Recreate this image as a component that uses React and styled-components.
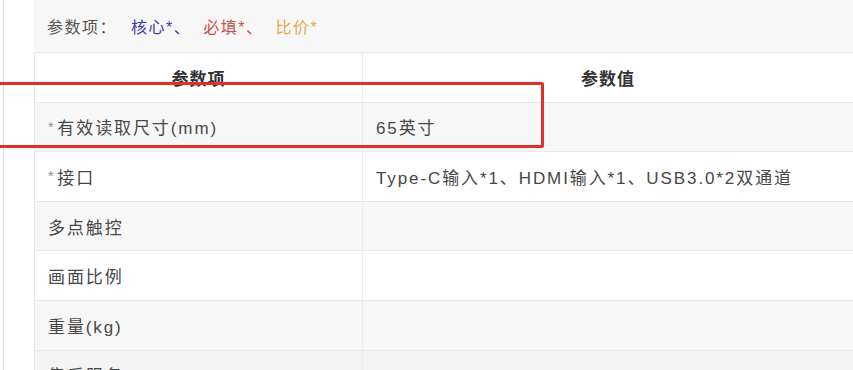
import React from "react";
import styled, { createGlobalStyle } from "styled-components";

const GlobalStyle = createGlobalStyle`
  html, body { margin: 0; padding: 0; background: #ffffff; }
  body {
    font-family: "Liberation Sans", "Noto Sans CJK SC", sans-serif;
    color: #444;
  }
`;

const Page = styled.div`
  position: relative;
  display: flex;
  width: 853px;
  height: 370px;
  overflow: hidden;
  background: #fff;
`;

const LeftRail = styled.div`
  flex: 0 0 30px;
  margin-left: 3px;
  border-left: 1px solid #dcdcdc;
`;

const Panel = styled.div`
  flex: 1;
  display: flex;
  flex-direction: column;
  min-width: 0;
`;

const LegendBar = styled.div`
  height: 52px;
  flex: 0 0 52px;
  box-sizing: border-box;
  display: flex;
  align-items: center;
  padding-left: 13px;
  background: #f7f7f7;
  font-size: 16px;
  letter-spacing: 1.5px;
  color: #555;
`;

const LegendLabel = styled.span`
  margin-right: 14px;
`;

const Tag = styled.span`
  color: ${(p) => p.$color};
  margin-right: 12px;
`;

const Table = styled.div`
  display: grid;
  grid-template-columns: 328px 1fr;
  border-left: 1px solid #e6e6e6;
  border-top: 1px solid #e6e6e6;
`;

const Cell = styled.div`
  height: 49.6px;
  box-sizing: border-box;
  display: flex;
  align-items: center;
  justify-content: ${(p) => (p.$head ? "center" : "flex-start")};
  padding: 0 13px;
  background: ${(p) => p.$bg};
  border-bottom: 1px solid #e8e8e8;
  border-right: ${(p) => (p.$first ? "1px solid #ececec" : "none")};
  font-size: 17px;
  letter-spacing: ${(p) => (p.$head ? "1px" : "1.9px")};
  font-weight: ${(p) => (p.$head ? 700 : 400)};
  color: ${(p) => (p.$head ? "#333" : "#474747")};
  white-space: nowrap;
`;

const Star = styled.span`
  color: #888;
  font-size: 14px;
  margin-right: 2px;
`;

const Highlight = styled.div`
  position: absolute;
  left: -4px;
  top: 82px;
  width: 548px;
  height: 66px;
  border: 3px solid #e0302a;
  border-radius: 2px;
  box-sizing: border-box;
  pointer-events: none;
`;

const rows = [
  { name: "有效读取尺寸(mm)", value: "65英寸", req: true, bg: "#f7f7f7" },
  { name: "接口", value: "Type-C输入*1、HDMI输入*1、USB3.0*2双通道", req: true, bg: "#ffffff" },
  { name: "多点触控", value: "", bg: "#f7f7f7" },
  { name: "画面比例", value: "", bg: "#ffffff" },
  { name: "重量(kg)", value: "", bg: "#f7f7f7" },
  { name: "售后服务", value: "", bg: "#f3f3f3" },
];

export default function App() {
  return (
    <>
      <GlobalStyle />
      <Page>
        <LeftRail />
        <Panel>
          <LegendBar>
            <LegendLabel>参数项：</LegendLabel>
            <Tag $color="#3b3ba6">核心*、</Tag>
            <Tag $color="#c9514c">必填*、</Tag>
            <Tag $color="#e6a94a">比价*</Tag>
          </LegendBar>
          <Table>
            <Cell $head $first $bg="#ffffff">参数项</Cell>
            <Cell $head $bg="#ffffff">参数值</Cell>
            {rows.map((r) => (
              <React.Fragment key={r.name}>
                <Cell $first $bg={r.bg}>
                  {r.req && <Star>*</Star>}
                  {r.name}
                </Cell>
                <Cell $bg={r.bg}>{r.value}</Cell>
              </React.Fragment>
            ))}
          </Table>
        </Panel>
        <Highlight />
      </Page>
    </>
  );
}
